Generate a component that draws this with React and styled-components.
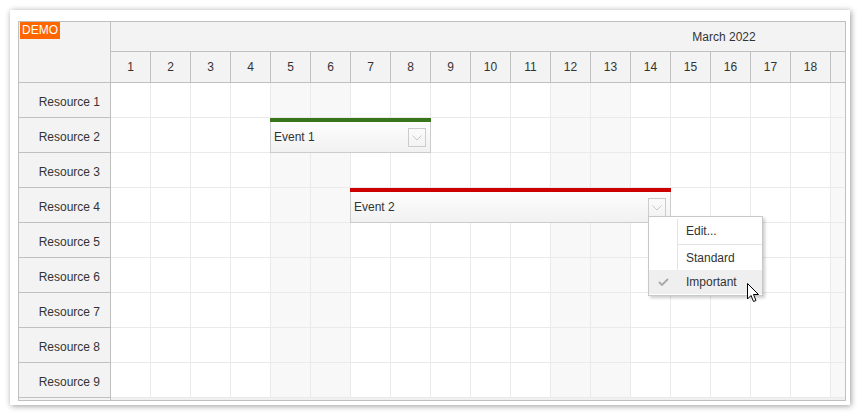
import React from "react";
import styled, { createGlobalStyle } from "styled-components";

const GlobalStyle = createGlobalStyle`
  body {
    margin: 0;
    background: #ffffff;
    font-family: "Liberation Sans", Arial, sans-serif;
    font-size: 12px;
    color: #333333;
  }
`;

const DAY_W = 40;
const ROW_H = 35;
const days = Array.from({ length: 19 }, (_, i) => i + 1);
const weekend = [5, 6, 12, 13, 19];
const resources = Array.from({ length: 9 }, (_, i) => `Resource ${i + 1}`);

const events = [
  { id: 1, text: "Event 1", start: 5, end: 8, row: 1, bar: "#38761d" },
  { id: 2, text: "Event 2", start: 7, end: 14, row: 3, bar: "#cc0000" },
];

const Frame = styled.div`
  box-sizing: border-box;
  width: 840px;
  height: 395px;
  margin: 10px;
  padding: 11px 4px 5px 8px;
  background: #ffffff;
  box-shadow: 1px 1px 6px rgba(0, 0, 0, 0.4);
`;

const Scheduler = styled.div`
  box-sizing: border-box;
  width: 828px;
  height: 380px;
  border: 1px solid #c0c0c0;
  background: #f0f0f0;
  overflow: hidden;
  display: grid;
  grid-template-columns: 92px 1fr;
  grid-template-rows: 61px 1fr;
`;

const Corner = styled.div`
  position: relative;
  box-sizing: border-box;
  background: #f3f3f3;
  border-right: 1px solid #c0c0c0;
  border-bottom: 1px solid #c0c0c0;
`;

const Demo = styled.span`
  position: absolute;
  left: 1px;
  top: 0;
  padding: 1px 2px;
  line-height: 15px;
  background: #ff6600;
  color: #ffffff;
  font-size: 12px;
`;

const TimeHeader = styled.div`
  overflow: hidden;
  background: #f3f3f3;
  display: flex;
  flex-direction: column;
`;

const MonthRow = styled.div`
  box-sizing: border-box;
  height: 30px;
  width: ${31 * DAY_W}px;
  padding-right: 14px;
  border-bottom: 1px solid #c0c0c0;
  display: flex;
  align-items: center;
  justify-content: center;
`;

const DayRow = styled.div`
  display: flex;
  height: 31px;
  box-sizing: border-box;
  border-bottom: 1px solid #c0c0c0;
`;

const DayCell = styled.div`
  box-sizing: border-box;
  flex: 0 0 ${DAY_W}px;
  border-right: 1px solid #c0c0c0;
  display: flex;
  align-items: center;
  justify-content: center;
`;

const RowHeaders = styled.div`
  box-sizing: border-box;
  border-right: 1px solid #c0c0c0;
  background: #f3f3f3;
`;

const RowHeader = styled.div`
  box-sizing: border-box;
  height: ${ROW_H}px;
  padding: 3px 10px 0 0;
  border-bottom: 1px solid #c0c0c0;
  display: flex;
  align-items: center;
  justify-content: flex-end;
`;

const Cells = styled.div`
  position: relative;
  overflow: hidden;
  align-self: start;
`;

const GridRow = styled.div`
  display: flex;
  height: ${ROW_H}px;
  box-sizing: border-box;
  border-bottom: 1px solid #eaeaea;
`;

const Cell = styled.div`
  box-sizing: border-box;
  flex: 0 0 ${DAY_W}px;
  border-right: 1px solid #eaeaea;
  background: ${(p) => (p.$weekend ? "#f8f8f8" : "#ffffff")};
`;

const EventBox = styled.div`
  position: absolute;
  box-sizing: border-box;
  height: ${ROW_H}px;
  border: 1px solid #cccccc;
  border-top: none;
  background: linear-gradient(#ffffff, #f1f1f1);
  display: flex;
  flex-direction: column;
`;

const EventBar = styled.div`
  height: 4px;
  margin: 0 -1px;
  background: ${(p) => p.$color};
`;

const EventText = styled.div`
  flex: 1;
  padding-left: 3px;
  display: flex;
  align-items: center;
`;

const MenuButton = styled.div`
  position: absolute;
  box-sizing: border-box;
  right: 4px;
  top: 10px;
  width: 18px;
  height: 19px;
  border: 1px solid #cccccc;
  display: flex;
  align-items: center;
  justify-content: center;
`;

const Menu = styled.div`
  position: absolute;
  box-sizing: border-box;
  left: 537px;
  top: 133px;
  width: 115px;
  padding: 2px 0 1px;
  background: #ffffff;
  border: 1px solid #c8c8c8;
  box-shadow: 2px 2px 3px rgba(0, 0, 0, 0.2);
`;

const MenuItem = styled.div`
  display: flex;
  height: 24px;
  background: ${(p) => (p.$hover ? "#efefef" : "transparent")};
`;

const MenuIcon = styled.div`
  flex: 0 0 29px;
  box-sizing: border-box;
  border-right: 1px solid ${(p) => (p.$hover ? "transparent" : "#e3e3e3")};
  display: flex;
  align-items: center;
  justify-content: center;
`;

const MenuLabel = styled.div`
  padding-left: 8px;
  display: flex;
  align-items: center;
`;

const MenuSeparator = styled.div`
  display: flex;
  height: 3px;
  &::before {
    content: "";
    flex: 0 0 29px;
    box-sizing: border-box;
    border-right: 1px solid #e3e3e3;
  }
  &::after {
    content: "";
    flex: 1;
    margin-top: 1px;
    height: 1px;
    background: #e3e3e3;
  }
`;

const Cursor = styled.svg`
  position: absolute;
  left: 636px;
  top: 200px;
`;

function Chevron() {
  return (
    <svg width="10" height="6" viewBox="0 0 10 6">
      <path d="M0.5 0.5 L5 5 L9.5 0.5" fill="none" stroke="#c8c8c8" strokeWidth="1" />
    </svg>
  );
}

function Check() {
  return (
    <svg width="11" height="8" viewBox="0 0 11 8">
      <path d="M1 4 L4 7 L10 1" fill="none" stroke="#a8a8a8" strokeWidth="1.8" />
    </svg>
  );
}

export default function App() {
  return (
    <>
      <GlobalStyle />
      <Frame>
        <Scheduler>
          <Corner>
            <Demo>DEMO</Demo>
          </Corner>
          <TimeHeader>
            <MonthRow>March 2022</MonthRow>
            <DayRow>
              {days.map((d) => (
                <DayCell key={d}>{d < 19 ? d : ""}</DayCell>
              ))}
            </DayRow>
          </TimeHeader>
          <RowHeaders>
            {resources.map((r) => (
              <RowHeader key={r}>{r}</RowHeader>
            ))}
          </RowHeaders>
          <Cells>
            {resources.map((r) => (
              <GridRow key={r}>
                {days.map((d) => (
                  <Cell key={d} $weekend={weekend.includes(d)} />
                ))}
              </GridRow>
            ))}
            {events.map((e) => (
              <EventBox
                key={e.id}
                style={{
                  left: (e.start - 1) * DAY_W - 1,
                  top: e.row * ROW_H,
                  width: (e.end - e.start + 1) * DAY_W + 1,
                }}
              >
                <EventBar $color={e.bar} />
                <EventText>{e.text}</EventText>
                <MenuButton>
                  <Chevron />
                </MenuButton>
              </EventBox>
            ))}
            <Menu>
              <MenuItem>
                <MenuIcon />
                <MenuLabel>Edit...</MenuLabel>
              </MenuItem>
              <MenuSeparator />
              <MenuItem>
                <MenuIcon />
                <MenuLabel>Standard</MenuLabel>
              </MenuItem>
              <MenuItem $hover>
                <MenuIcon $hover>
                  <Check />
                </MenuIcon>
                <MenuLabel>Important</MenuLabel>
              </MenuItem>
            </Menu>
            <Cursor width="13" height="20" viewBox="0 0 13 20">
              <path
                d="M0.5 0.5 L0.5 16 L4 12.5 L6.5 18.5 L9 17.5 L6.5 11.5 L11.5 11.5 Z"
                fill="#ffffff"
                stroke="#000000"
                strokeWidth="1"
                strokeLinejoin="round"
              />
            </Cursor>
          </Cells>
        </Scheduler>
      </Frame>
    </>
  );
}
